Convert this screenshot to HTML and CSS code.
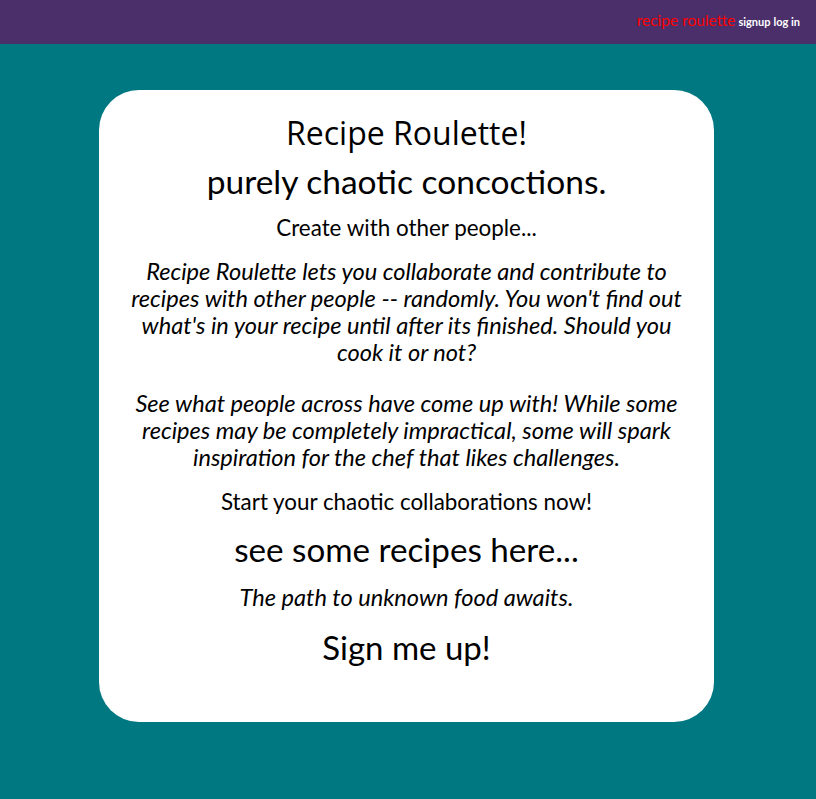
FILE: index.html
```html
<!DOCTYPE html>
<html>
<head>
<meta charset="utf-8">
<link rel="stylesheet" href="styles.css">
</head>
<body>
<header class="topbar">
  <nav class="nav">
    <a class="brand" href="#">recipe roulette</a>
    <a class="navlink" href="#">signup</a>
    <a class="navlink" href="#">log in</a>
  </nav>
</header>
<main class="page">
  <section class="card">
    <h1 class="title">Recipe Roulette!</h1>
    <h2 class="tagline">purely chaotic concoctions.</h2>
    <p class="lead">Create with other people...</p>
    <p class="blurb first">Recipe Roulette lets you collaborate and contribute to recipes with other people -- randomly. You won't find out what's in your recipe until after its finished. Should you cook it or not?</p>
    <p class="blurb second">See what people across have come up with! While some recipes may be completely impractical, some will spark inspiration for the chef that likes challenges.</p>
    <p class="lead start">Start your chaotic collaborations now!</p>
    <h2 class="link-big">see some recipes here...</h2>
    <p class="blurb short">The path to unknown food awaits.</p>
    <h2 class="signup">Sign me up!</h2>
  </section>
</main>
</body>
</html>
```
FILE: styles.css
```css
html, body {
  margin: 0;
  padding: 0;
}
body {
  background: #007882;
  font-family: Lato, "Open Sans", sans-serif;
  color: #000;
  min-height: 799px;
}
.topbar {
  background: #4a2f6b;
  height: 44px;
  display: flex;
  justify-content: flex-end;
  align-items: flex-start;
  padding-right: 16px;
}
.nav {
  display: flex;
  align-items: baseline;
  gap: 3px;
  padding-top: 11px;
}
.nav a {
  text-decoration: none;
}
.brand {
  color: #ff0000;
  font-size: 15.5px;
}
.navlink {
  color: #ffffff;
  font-size: 11px;
  font-weight: bold;
}
.page {
  display: flex;
  justify-content: center;
  padding-top: 46px;
  padding-right: 3px;
}
.card {
  background: #fff;
  width: 615px;
  box-sizing: border-box;
  border-radius: 40px;
  padding: 21px 28px 52px;
  text-align: center;
}
.title {
  font-family: "Open Sans", Lato, sans-serif;
  font-weight: 400;
  font-size: 32px;
  margin: 0;
  line-height: 44px;
}
.tagline {
  font-weight: 400;
  font-size: 33.5px;
  margin: 4px 0 0;
  line-height: 44px;
}
.lead {
  font-size: 22.4px;
  margin: 11px 0 0;
  line-height: 28px;
}
.blurb {
  font-style: italic;
  font-size: 23.6px;
  line-height: 27px;
  margin: 0;
}
.first {
  margin-top: 16px;
}
.second {
  margin-top: 24px;
}
.start {
  margin-top: 17px;
}
.link-big {
  font-weight: 400;
  font-size: 33.2px;
  margin: 13px 0 0;
  line-height: 40px;
}
.short {
  margin-top: 15px;
}
.signup {
  font-weight: 400;
  font-size: 33px;
  margin: 13px 0 0;
  line-height: 46px;
}
```
